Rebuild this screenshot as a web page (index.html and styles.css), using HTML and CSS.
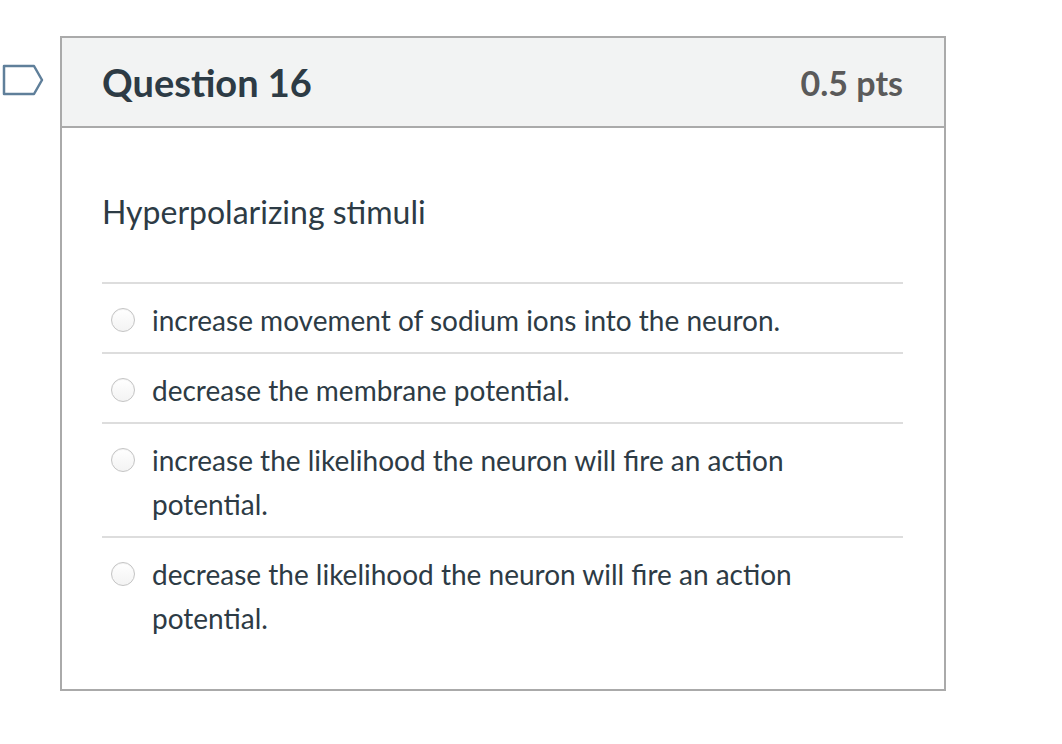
FILE: index.html
```html
<!DOCTYPE html>
<html lang="en">
<head>
<meta charset="utf-8">
<title>Question 16</title>
<link rel="stylesheet" href="styles.css">
</head>
<body>
<div class="page">
  <div class="flag">
    <svg width="46" height="34" viewBox="0 0 46 34" aria-hidden="true">
      <path d="M4 3 H34 L42 17 L34 31 H4 Z" fill="#ffffff" stroke="#5f7f9a" stroke-width="2.5" stroke-linejoin="round"/>
    </svg>
  </div>
  <div class="question">
    <div class="q-header">
      <h2 class="q-title">Question 16</h2>
      <span class="q-pts">0.5 pts</span>
    </div>
    <div class="q-body">
      <p class="q-text">Hyperpolarizing stimuli</p>
      <div class="answers">
        <label class="answer"><span class="radio"></span><span class="answer-text">increase movement of sodium ions into the neuron.</span></label>
        <label class="answer"><span class="radio"></span><span class="answer-text">decrease the membrane potential.</span></label>
        <label class="answer"><span class="radio"></span><span class="answer-text">increase the likelihood the neuron will fire an action potential.</span></label>
        <label class="answer"><span class="radio"></span><span class="answer-text">decrease the likelihood the neuron will fire an action potential.</span></label>
      </div>
    </div>
  </div>
</div>
</body>
</html>
```
FILE: styles.css
```css
* { box-sizing: border-box; }
html, body { margin: 0; padding: 0; background: #ffffff; }
body { font-family: Lato, "Noto Sans", sans-serif; color: #2d3b45; }
.page {
  display: flex;
  align-items: flex-start;
  padding-top: 36px;
}
.flag {
  width: 60px;
  padding-top: 27px;
}
.flag svg { display: block; }
.question {
  width: 886px;
  border: 2px solid #aaaaaa;
}
.q-header {
  height: 90px;
  background: #f2f3f3;
  border-bottom: 2px solid #aaaaaa;
  display: flex;
  align-items: center;
  justify-content: space-between;
  padding: 0 41px 0 40px;
}
.q-title {
  margin: 0;
  font-size: 38px;
  font-weight: 700;
  color: #2d3b45;
}
.q-pts {
  font-size: 34px;
  font-weight: 700;
  color: #5a5a5a;
}
.q-body {
  padding: 0 41px 39px 40px;
}
.q-text {
  margin: 0;
  padding-top: 62px;
  padding-bottom: 48px;
  font-size: 32px;
  line-height: 44px;
}
.answers { display: flex; flex-direction: column; }
.answer {
  display: flex;
  align-items: flex-start;
  border-top: 2px solid #dddddd;
  padding: 14px 0 10px 9px;
  font-size: 28px;
  line-height: 44px;
}
.radio {
  flex: none;
  width: 24px;
  height: 24px;
  margin-top: 10px;
  margin-right: 17px;
  border-radius: 50%;
  border: 1px solid #c4c4c4;
  background: linear-gradient(#ffffff, #f3f3f3);
  box-shadow: inset 0 1px 1px rgba(0,0,0,0.05);
}
.answer-text { max-width: 690px; }
```
